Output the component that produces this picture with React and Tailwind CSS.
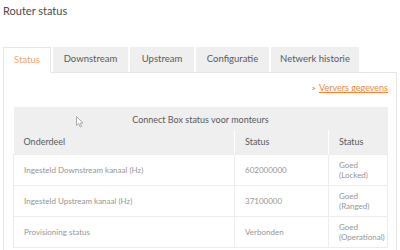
import React from 'react';

const tabs = [
    { label: 'Status', w: 'w-[48px]', active: true },
    { label: 'Downstream', w: 'w-[75px]' },
    { label: 'Upstream', w: 'w-[64px]' },
    { label: 'Configuratie', w: 'w-[73px]' },
    { label: 'Netwerk historie', w: 'w-[88px]' },
];

const rows = [
    { name: 'Ingesteld Downstream kanaal (Hz)', value: '602000000', status: ['Goed', '(Locked)'] },
    { name: 'Ingesteld Upstream kanaal (Hz)', value: '37100000', status: ['Goed', '(Ranged)'] },
    { name: 'Provisioning status', value: 'Verbonden', status: ['Goed', '(Operational)'] },
];

const App = () => {
    return (
        <div className="relative w-[400px] h-[250px] overflow-hidden bg-white font-['Lato',sans-serif] text-[#555]">
            <h1 className="pl-[3px] pt-[3px] text-[11px] leading-[16px] text-[#4a4a4a]">Router status</h1>

            {/* tabs */}
            <div className="mt-[28px] flex gap-[2px] pl-[3px]">
                {tabs.map((t) => (
                    <div
                        key={t.label}
                        className={`${t.w} h-[25px] flex items-center justify-center text-[9.5px] ${
                            t.active
                                ? 'bg-white text-[#eda868] border border-b-0 border-[#e6e6e6] relative z-10 h-[26px] -mb-[1px]'
                                : 'bg-[#efefef] text-[#5a5a5a]'
                        }`}
                    >
                        {t.label}
                    </div>
                ))}
            </div>

            {/* panel */}
            <div className="ml-[3px] w-[394px] h-[200px] border border-[#e6e6e6] bg-white">
                <div className="flex justify-end items-center pr-[8px] pt-[8px] h-[22px] text-[9px] text-[#e8893a]">
                    <span className="mr-[3px] text-[8px] font-bold">&gt;</span>
                    <span className="underline underline-offset-[1px]">Ververs gegevens</span>
                </div>

                <div className="ml-[9px] mt-[12px] w-[374px]">
                    <table className="w-full border-collapse table-fixed">
                        <colgroup>
                            <col className="w-[221px]" />
                            <col className="w-[94px]" />
                            <col className="w-[59px]" />
                        </colgroup>
                        <thead>
                            <tr className="bg-[#efefef]">
                                <th colSpan={3} className="h-[23px] pt-[2px] text-center font-normal text-[9px] text-[#5a5a5a]">
                                    Connect Box status voor monteurs
                                </th>
                            </tr>
                            <tr className="bg-[#efefef]">
                                <th className="h-[24px] pl-[10px] text-left font-normal text-[9px] text-[#5a5a5a]">Onderdeel</th>
                                <th className="h-[24px] pl-[10px] text-left font-normal text-[9px] text-[#5a5a5a] border-l border-white">Status</th>
                                <th className="h-[24px] pl-[10px] text-left font-normal text-[9px] text-[#5a5a5a] border-l border-white">Status</th>
                            </tr>
                        </thead>
                        <tbody className="border border-[#ececec]">
                            {rows.map((r) => (
                                <tr key={r.name} className="border-t border-[#ececec]">
                                    <td className="h-[31px] pl-[10px] text-[8px] text-[#959595]">{r.name}</td>
                                    <td className="h-[31px] pl-[10px] text-[8px] text-[#959595] border-l border-[#ececec]">{r.value}</td>
                                    <td className="h-[31px] pl-[10px] text-[8px] leading-[10px] text-[#959595] border-l border-[#ececec]">
                                        {r.status[0]}
                                        <br />
                                        {r.status[1]}
                                    </td>
                                </tr>
                            ))}
                        </tbody>
                    </table>
                </div>
            </div>

            {/* mouse cursor */}
            <svg className="absolute left-[76px] top-[116px]" width="8" height="12" viewBox="0 0 8 12">
                <path d="M0.5 0.5 L0.5 9.5 L2.7 7.5 L4.2 11 L5.6 10.4 L4.1 7 L7 7 Z" fill="white" stroke="#9a9a9a" strokeWidth="0.8" />
            </svg>
        </div>
    );
};

export default App;
